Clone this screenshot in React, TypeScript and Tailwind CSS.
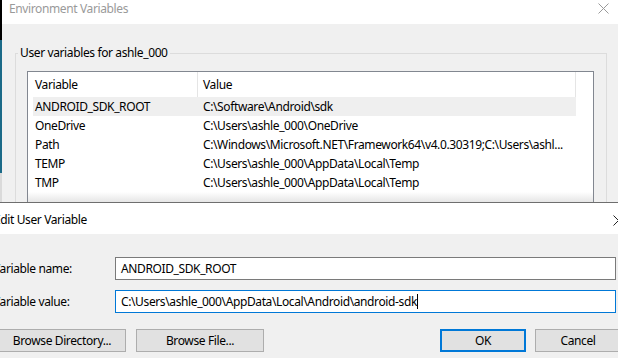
import React from "react";

const rows: [string, string][] = [
  ["ANDROID_SDK_ROOT", "C:\\Software\\Android\\sdk"],
  ["OneDrive", "C:\\Users\\ashle_000\\OneDrive"],
  ["Path", "C:\\Windows\\Microsoft.NET\\Framework64\\v4.0.30319;C:\\Users\\ashl..."],
  ["TEMP", "C:\\Users\\ashle_000\\AppData\\Local\\Temp"],
  ["TMP", "C:\\Users\\ashle_000\\AppData\\Local\\Temp"],
];

function CloseX({ color, className }: { color: string; className?: string }) {
  return (
    <svg width="11" height="11" viewBox="0 0 11 11" className={className}>
      <path d="M0.5 0.5 L10.5 10.5 M10.5 0.5 L0.5 10.5" stroke={color} strokeWidth="1" fill="none" />
    </svg>
  );
}

export default function App() {
  return (
    <div className="w-[618px] h-[358px] overflow-hidden flex flex-col bg-[#f0f0f0] text-[12px] leading-[16px] tracking-[-0.38px] text-black font-['Noto_Sans',sans-serif]">
      {/* Environment Variables window */}
      <div className="h-[202px] shrink-0 flex overflow-hidden">
        <div className="w-[2px] shrink-0 flex flex-col">
          <div className="h-[40px] bg-black" />
          <div className="h-[133px] bg-[#1b6a88]" />
          <div className="flex-1 bg-[#dadada]" />
        </div>
        <div className="flex-1 min-w-0 flex flex-col">
          <div className="h-[24px] shrink-0 bg-white flex items-start justify-between pl-[7px] pr-[9px] pt-[1px]">
            <span className="text-[#9a9a9a]">Environment Variables</span>
            <CloseX color="#9a9a9a" className="mt-[2px]" />
          </div>
          <div className="flex-1 min-h-0 bg-[#f0f0f0] pt-[21px] pl-[13px] pr-[11px]">
            <fieldset className="border border-[#dcdcdc] p-0 m-0 h-[300px] min-w-0">
              <legend className="ml-[2px] px-[2px] leading-[16px]">User variables for ashle_000</legend>
              <div className="mt-[10px] ml-[11px] mr-[12px] border border-[#828790] bg-white h-[200px] pl-[5px] flex flex-col">
                <div className="flex h-[25px] shrink-0">
                  <div className="w-[165px] border-r border-[#e5e5e5] pl-[2px] pt-[1px] flex items-center">Variable</div>
                  <div className="w-[378px] border-r border-[#e5e5e5] pl-[5px] pt-[1px] flex items-center">Value</div>
                </div>
                {rows.map(([k, v], i) => (
                  <div
                    key={k}
                    className={`flex h-[19px] shrink-0 w-[543px] items-center pt-[1px] ${i === 0 ? "bg-[#efefef]" : ""}`}
                  >
                    <div className="w-[165px] pl-[2px] whitespace-nowrap overflow-hidden">{k}</div>
                    <div className="w-[378px] pl-[5px] whitespace-nowrap overflow-hidden">{v}</div>
                  </div>
                ))}
                <div className="h-[10px] shrink-0 -ml-[5px] bg-gradient-to-b from-white to-[#e6e6e6]" />
              </div>
            </fieldset>
          </div>
        </div>
      </div>

      {/* Edit User Variable dialog */}
      <div className="flex-1 min-h-0 flex flex-col border-t border-[#6e6e6e]">
        <div className="h-[31px] shrink-0 bg-white flex items-center justify-between pt-[3px]">
          <span className="-ml-[6px]">Edit User Variable</span>
          <CloseX color="#222" className="-mr-[6px]" />
        </div>
        <div className="flex-1 bg-[#f0f0f0] pt-[23px] flex flex-col">
          <div className="flex items-center h-[23px]">
            <span className="-ml-[7px] w-[122px] shrink-0 whitespace-nowrap">Variable name:</span>
            <div className="flex-1 h-full mr-[2px] border border-[#7a7a7a] bg-white pl-[5px] flex items-center whitespace-nowrap">
              ANDROID_SDK_ROOT
            </div>
          </div>
          <div className="flex items-center h-[23px] mt-[10px]">
            <span className="-ml-[7px] w-[122px] shrink-0 whitespace-nowrap">Variable value:</span>
            <div className="flex-1 h-full mr-[2px] border border-[#0078d7] bg-white pl-[5px] flex items-center whitespace-nowrap">
              <span>C:\Users\ashle_000\AppData\Local\Android\android-sdk</span>
              <span className="w-[1px] h-[15px] bg-black" />
            </div>
          </div>
          <div className="flex items-center h-[23px] mt-[16px]">
            <button className="-ml-[2px] w-[128px] h-full shrink-0 border border-[#adadad] bg-[#e1e1e1] flex items-center justify-center">
              Browse Directory...
            </button>
            <button className="ml-[10px] w-[128px] h-full shrink-0 border border-[#adadad] bg-[#e1e1e1] flex items-center justify-center">
              Browse File...
            </button>
            <div className="flex-1" />
            <button className="w-[86px] h-full shrink-0 border-2 border-[#0078d7] bg-[#e1e1e1] flex items-center justify-center">
              OK
            </button>
            <button className="ml-[9px] -mr-[3px] w-[86px] h-full shrink-0 border border-[#adadad] bg-[#e1e1e1] flex items-center justify-center">
              Cancel
            </button>
          </div>
        </div>
      </div>
    </div>
  );
}
